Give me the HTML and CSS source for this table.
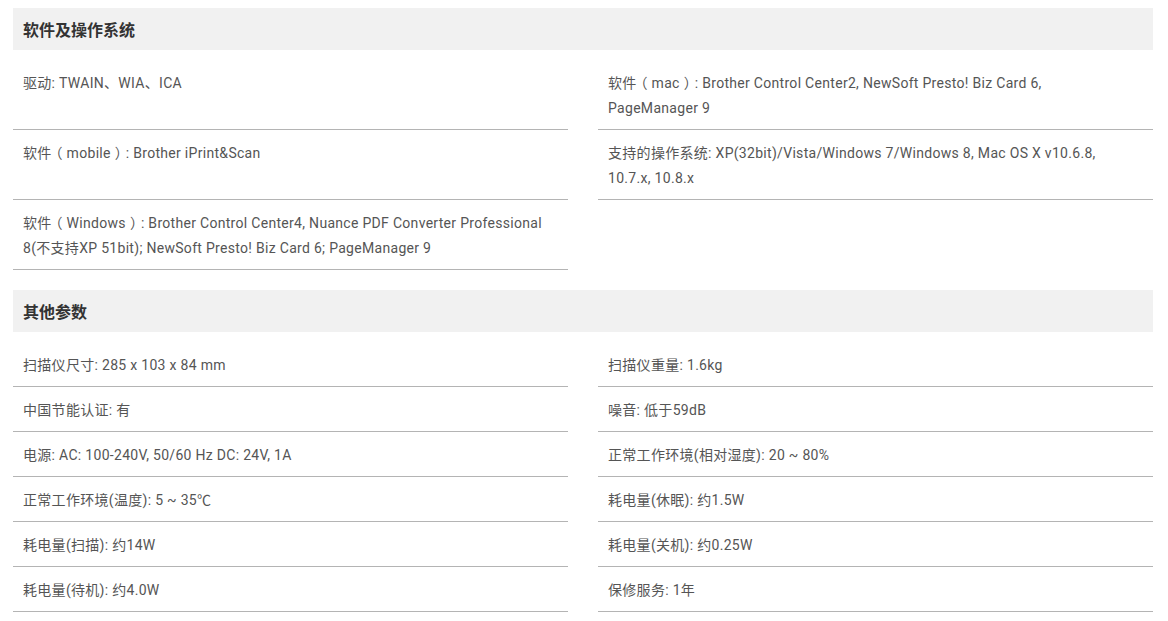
FILE: index.html
```html
<!DOCTYPE html>
<html lang="zh-CN">
<head>
<meta charset="utf-8">
<title>参数</title>
<link rel="stylesheet" href="styles.css">
</head>
<body>
<div class="page">
  <section class="sec">
    <h2 class="sec-title">软件及操作系统</h2>
    <div class="grid">
      <div class="item">驱动: TWAIN、WIA、ICA</div>
      <div class="item">软件<span class="fw">（</span>mac<span class="fw">）</span>: Brother Control Center2, NewSoft Presto! Biz Card 6, PageManager 9</div>
      <div class="item">软件<span class="fw">（</span>mobile<span class="fw">）</span>: Brother iPrint&amp;Scan</div>
      <div class="item">支持的操作系统: XP(32bit)/Vista/Windows 7/Windows 8, Mac OS X v10.6.8, 10.7.x, 10.8.x</div>
      <div class="item">软件<span class="fw">（</span>Windows<span class="fw">）</span>: Brother Control Center4, Nuance PDF Converter Professional 8(不支持XP 51bit); NewSoft Presto! Biz Card 6; PageManager 9</div>
    </div>
  </section>
  <section class="sec">
    <h2 class="sec-title">其他参数</h2>
    <div class="grid">
      <div class="item">扫描仪尺寸: 285 x 103 x 84 mm</div>
      <div class="item">扫描仪重量: 1.6kg</div>
      <div class="item">中国节能认证: 有</div>
      <div class="item">噪音: 低于59dB</div>
      <div class="item">电源: AC: 100-240V, 50/60 Hz DC: 24V, 1A</div>
      <div class="item">正常工作环境(相对湿度): 20 ~ 80%</div>
      <div class="item">正常工作环境(温度): 5 ~ 35℃</div>
      <div class="item">耗电量(休眠): 约1.5W</div>
      <div class="item">耗电量(扫描): 约14W</div>
      <div class="item">耗电量(关机): 约0.25W</div>
      <div class="item">耗电量(待机): 约4.0W</div>
      <div class="item">保修服务: 1年</div>
    </div>
  </section>
</div>
</body>
</html>
```
FILE: styles.css
```css
* { box-sizing: border-box; }
html, body { margin: 0; padding: 0; background: #fff; }
body {
  font-family: Roboto, "Noto Sans CJK SC", sans-serif;
  color: #555;
}
.page {
  width: 1140px;
  margin: 0 0 0 13px;
  padding-top: 8px;
}
.sec + .sec { margin-top: 20px; }
.sec-title {
  margin: 0;
  height: 42px;
  line-height: 42px;
  padding-left: 10px;
  background: #f1f1f1;
  font-family: "Noto Sans CJK SC", sans-serif;
  font-size: 16px;
  font-weight: bold;
  color: #333;
}
.grid {
  display: grid;
  grid-template-columns: 555px 555px;
  column-gap: 30px;
  margin-top: 10px;
}
.item {
  padding: 11px 10px 8px;
  font-size: 14px;
  line-height: 25px;
  letter-spacing: 0.3px;
  border-bottom: 1px solid #b4b4b4;
}
.item:nth-child(even) {
  padding-right: 50px;
}
.fw {
  font-family: "Noto Sans CJK SC", sans-serif;
  font-feature-settings: "halt";
  letter-spacing: 0;
  line-height: 1;
  padding: 0 4px;
}
```
